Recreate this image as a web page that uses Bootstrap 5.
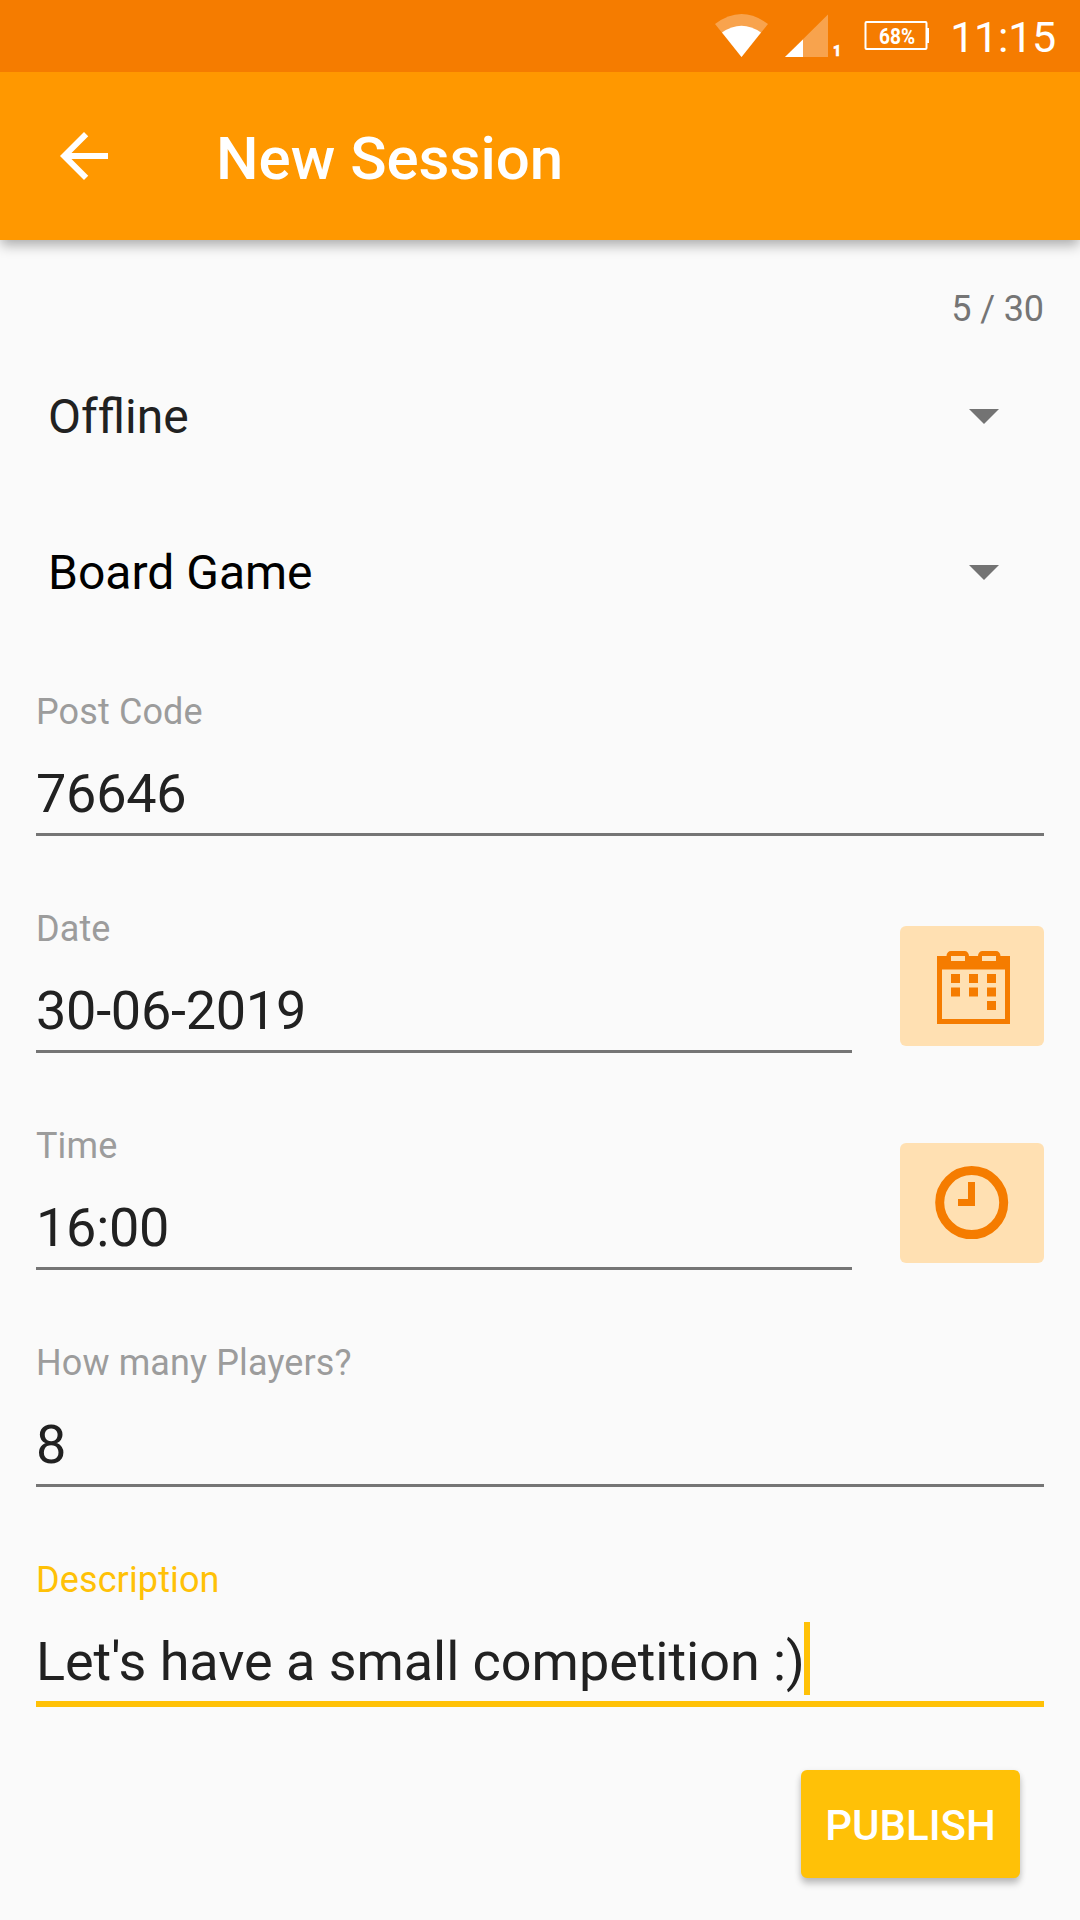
<!DOCTYPE html>
<html lang="en">
<head>
<meta charset="utf-8">
<meta name="viewport" content="width=device-width, initial-scale=1">
<title>New Session</title>
<link href="https://cdn.jsdelivr.net/npm/bootstrap@5.3.0/dist/css/bootstrap.min.css" rel="stylesheet">
<style>
  body { font-family: Roboto, sans-serif; background: #fafafa; color: #212121; width: 1080px; height: 1920px; overflow: hidden; }
  svg { display: block; flex: none; }
  .status-bar { height: 72px; background: #f57c00; color: #fff; padding-right: 24px; z-index: 2; }
  .status-clock { width: 107px; text-align: right; font-size: 43px; line-height: 74px; letter-spacing: -.25px; }
  .app-bar { height: 168px; background: #ff9800; color: #fff; padding: 0 48px; box-shadow: 0 6px 12px -1px rgba(0,0,0,.32); }
  .app-title { font-size: 60px; line-height: 72px; font-weight: 500; margin-left: 96px; padding-top: 5px; }
  .session-form { padding: 45px 36px 0; }
  .counter { font-size: 36px; line-height: 48px; letter-spacing: -.1px; color: #757575; margin-bottom: 6px; }
  .spinner-row { height: 156px; padding: 0 45px 0 12px; font-size: 48px; line-height: 72px; }
  .field { padding-top: 69px; }
  .field-first { padding-top: 37px; }
  .field-label { font-size: 36px; line-height: 48px; letter-spacing: .12px; color: #9c9c9c; margin-bottom: 22px; }
  .field-value { font-size: 54px; line-height: 72px; height: 78px; letter-spacing: -.26px; border-bottom: 3px solid #757575; white-space: nowrap; }
  .field-active .field-label { color: #ffc107; }
  .field-active .field-value { height: 81px; letter-spacing: -.05px; border-bottom: 6px solid #ffc107; }
  .text-caret { width: 6px; height: 73px; background: #ffc107; margin: -4px 0 0 -1px; }
  .picker-btn { width: 144px; height: 120px; margin: 0 0 7px 48px; border: 0; border-radius: 6px; background: #ffe0b2; }
  .publish-btn { width: 219px; height: 108px; margin: 63px 24px 0 0; border: 0; border-radius: 6px; background: #ffc107; color: #fff; font-size: 42px; font-weight: 500; line-height: 104px; padding: 4px 0 0; box-shadow: 0 6px 7px rgba(0,0,0,.2), 0 2px 6px rgba(0,0,0,.1); }
</style>
<script src="https://cdn.jsdelivr.net/npm/bootstrap@5.3.0/dist/js/bootstrap.bundle.min.js"></script>
</head>
<body>
<div class="status-bar d-flex justify-content-end position-relative">
  <!-- wifi, mobile signal, battery -->
  <svg width="234" height="72" viewBox="715 0 234 72" fill="#fff">
    <path d="M715 24Q741.500 4 768 24L741.500 57Z" opacity=".3"/>
    <path d="M722 32.500Q741.500 19 761 32.500L741.500 57Z"/>
    <path d="M828 14.500V57H785Z" opacity=".3"/>
    <path d="M803 39.500V57H785Z"/>
    <text x="833" y="56" font-family="Roboto, sans-serif" font-size="15.500" font-weight="900" stroke="#fff" stroke-width=".7" textLength="8" lengthAdjust="spacingAndGlyphs">1</text>
    <rect x="865.500" y="22" width="61" height="27" rx="1" fill="none" stroke="#fff" stroke-width="2"/>
    <rect x="926" y="28" width="3" height="15"/>
    <text x="879" y="44" font-family="Roboto, sans-serif" font-size="22" font-weight="700" textLength="36" lengthAdjust="spacingAndGlyphs">68%</text>
  </svg>
  <div class="status-clock">11:15</div>
</div>
<header class="app-bar d-flex align-items-center position-relative">
  <svg width="72" height="72" viewBox="0 0 24 24" fill="#fff"><path d="M20 11H7.830l5.590-5.590L12 4l-8 8 8 8 1.410-1.410L7.830 13H20z"/></svg>
  <h1 class="app-title mb-0">New Session</h1>
</header>
<main class="session-form">
  <div class="counter text-end">5 / 30</div>
  <div class="spinner-row d-flex align-items-center justify-content-between">
    <span>Of<span class="d-inline-block">fline</span></span>
    <svg width="30" height="16" viewBox="0 0 30 16"><path d="M0 0H30L15 15Z" fill="#737373"/></svg>
  </div>
  <div class="spinner-row d-flex align-items-center justify-content-between text-black">
    <span>Board Game</span>
    <svg width="30" height="16" viewBox="0 0 30 16"><path d="M0 0H30L15 15Z" fill="#737373"/></svg>
  </div>
  <div class="field field-first">
    <div class="field-label">Post Code</div>
    <div class="field-value">76646</div>
  </div>
  <div class="d-flex align-items-end">
    <div class="field flex-grow-1">
      <div class="field-label">Date</div>
      <div class="field-value">30-06-2019</div>
    </div>
    <button class="picker-btn p-0" type="button" aria-label="Pick date">
      <svg width="144" height="120" viewBox="0 0 144 120" fill="#f57c00">
        <path fill-rule="evenodd" d="M37 30H46.500C46.500 27 48.500 25 51 25H64.500C67 25 69 27 69 30H78C78 27 80 25 82.500 25H96C98.500 25 100.500 27 100.500 30H110V98H37ZM42 43.500V93H105V43.500ZM51 30V35H65V30ZM82 30V35H96V30Z"/>
        <path d="M51 48h9v9h-9zM69 48h9v9h-9zM87 48h9v9h-9zM51 61.500h9v9h-9zM69 61.500h9v9h-9zM87 61.500h9v9h-9zM87 75h9v9h-9z"/>
      </svg>
    </button>
  </div>
  <div class="d-flex align-items-end">
    <div class="field flex-grow-1">
      <div class="field-label">Time</div>
      <div class="field-value">16:00</div>
    </div>
    <button class="picker-btn p-0" type="button" aria-label="Pick time">
      <svg width="144" height="120" viewBox="0 0 144 120">
        <circle cx="71.700" cy="59.600" r="32" fill="none" stroke="#f57c00" stroke-width="9"/>
        <path d="M68 39H75V63H58V56H68Z" fill="#f57c00"/>
      </svg>
    </button>
  </div>
  <div class="field">
    <div class="field-label">How many Players?</div>
    <div class="field-value">8</div>
  </div>
  <div class="field field-active">
    <div class="field-label">Description</div>
    <div class="field-value d-flex"><span>Let's have a small competition :)</span><span class="text-caret"></span></div>
  </div>
  <div class="d-flex justify-content-end">
    <button class="publish-btn" type="button">PUBLISH</button>
  </div>
</main>
</body>
</html>
